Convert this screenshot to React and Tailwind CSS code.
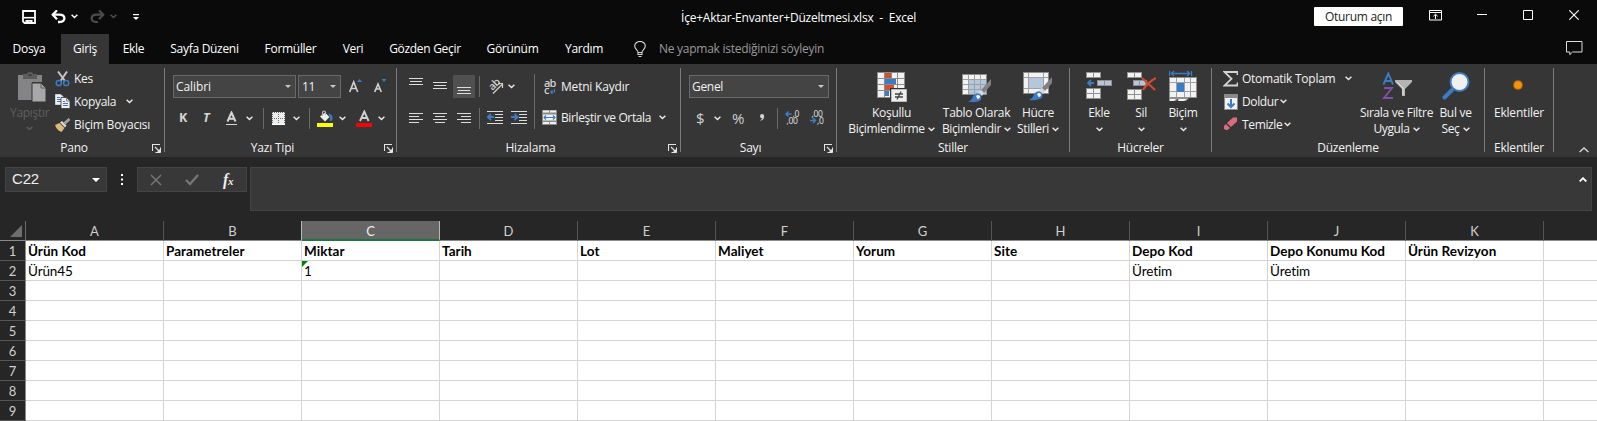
import React from 'react';

const SANS = "font-['Open_Sans','Noto_Sans',sans-serif]";

const Chevron = ({ className = '', color = '#e8e8e8' }) => (
  <svg width="7" height="5" viewBox="0 0 7 5" className={`shrink-0 ${className}`}>
    <path d="M0.6 0.8L3.5 3.5L6.4 0.8" fill="none" stroke={color} strokeWidth="1.5" />
  </svg>
);

const Caret = ({ className = '', color = '#c8c8c8' }) => (
  <svg width="6" height="3" viewBox="0 0 6 3" className={`shrink-0 ${className}`}>
    <path d="M0 0H6L3 3Z" fill={color} />
  </svg>
);

const Launcher = () => (
  <svg width="9" height="9" viewBox="0 0 9 9" className="mr-[3px] ml-1 mt-px shrink-0">
    <path d="M0.5 7V0.5H8M3 3L7 7" fill="none" stroke="#e4e4e4" strokeWidth="1.1" />
    <path d="M3.5 8.5H8.5V3.5" fill="none" stroke="#e4e4e4" strokeWidth="1" />
    <path d="M4.5 8.5H8.5V4.5Z" fill="#e4e4e4" />
  </svg>
);

const VLine = ({ className = '' }) => <div className={`w-px shrink-0 bg-[#6a6a6a] ${className}`} />;

function Group({ label, className, launcher, children }) {
  return (
    <>
      <div className={`flex shrink-0 flex-col ${className}`}>
        <div className="h-[74px]">{children}</div>
        <div className="flex h-[19px] items-center">
          <div className="flex-1 pt-px text-center tracking-[-0.2px]">{label}</div>
          {launcher && <Launcher />}
        </div>
      </div>
      <div className="mt-1 h-[84px] w-px shrink-0 bg-[#7c7c7c]" />
    </>
  );
}

/* ---------- Title bar ---------- */
function TitleBar() {
  return (
    <div className="flex h-[34px] items-start text-white">
      <div className="flex w-[681px] shrink-0 pt-2.5">
        <svg width="14" height="14" viewBox="0 0 14 14" className="ml-[22px]">
          <path d="M1 1H13V13H2.5L1 11.5Z" fill="none" stroke="#fff" strokeWidth="1.8" />
          <path d="M1.5 7.7H12.5" stroke="#fff" strokeWidth="1.6" />
          <path d="M3.5 10H10.5V14H8.4V11.8H6.4V14H3.5Z" fill="#fff" />
        </svg>
        <svg width="15" height="14" viewBox="0 0 15 14" className="ml-[15px]">
          <path d="M1.5 4.7H8.5C15 4.7 15 12 8.5 12H7" fill="none" stroke="#fff" strokeWidth="2.3" />
          <path d="M6 0.3L1.8 4.7L6 9.2" fill="none" stroke="#fff" strokeWidth="2.3" />
        </svg>
        <Chevron className="mt-1 ml-[5px]" color="#fff" />
        <svg width="15" height="14" viewBox="0 0 15 14" className="ml-3">
          <path d="M13.5 4.7H6.5C0 4.7 0 12 6.5 12H8" fill="none" stroke="#4c4c4c" strokeWidth="2.2" />
          <path d="M9 0.3L13.2 4.7L9 9.2" fill="none" stroke="#4c4c4c" strokeWidth="2.2" />
        </svg>
        <Chevron className="mt-1 ml-[5px]" color="#505050" />
        <svg width="6" height="7" viewBox="0 0 6 7" className="mt-1 ml-4">
          <path d="M0 0.6H6" stroke="#fff" strokeWidth="1.2" />
          <path d="M0 3H6L3 6Z" fill="#fff" />
        </svg>
      </div>
      <div className="w-[633px] shrink-0 pt-[9px] leading-[18px] tracking-[-0.22px] whitespace-pre">
        İçe+Aktar-Envanter+Düzeltmesi.xlsx  -  Excel
      </div>
      <div className="mt-[7px] h-[19px] w-[89px] shrink-0 rounded-[1px] bg-white text-center leading-[19px] text-[#222]">
        Oturum açın
      </div>
      <svg width="13" height="11" viewBox="0 0 13 11" className="mt-2.5 ml-[26px]">
        <path d="M0.5 0.5H12.5V10H0.5ZM0.5 2.5H12.5M6.5 9V4.5M4.3 6.3L6.5 4.2L8.7 6.3" fill="none" stroke="#fff" />
      </svg>
      <svg width="10" height="1" viewBox="0 0 10 1" className="mt-3.5 ml-[35px]">
        <path d="M0 0.5H10" stroke="#fff" />
      </svg>
      <svg width="10" height="10" viewBox="0 0 10 10" className="mt-2.5 ml-9">
        <path d="M0.5 0.5H9.5V9.5H0.5Z" fill="none" stroke="#fff" />
      </svg>
      <svg width="10" height="10" viewBox="0 0 10 10" className="mt-2.5 ml-9">
        <path d="M0.3 0.3L9.7 9.7M9.7 0.3L0.3 9.7" fill="none" stroke="#fff" strokeWidth="1.1" />
      </svg>
    </div>
  );
}

const TABS = [
  ['Dosya', 'w-[58px] mr-[3px]'],
  ['Giriş', 'w-12 bg-[#363636]'],
  ['Ekle', 'w-[49px]'],
  ['Sayfa Düzeni', 'w-[93px]'],
  ['Formüller', 'w-[79px]'],
  ['Veri', 'w-[46px]'],
  ['Gözden Geçir', 'w-[98px]'],
  ['Görünüm', 'w-[77px]'],
  ['Yardım', 'w-[66px]'],
];

function Tabs() {
  return (
    <div className="flex h-[30px] text-white">
      {TABS.map(([t, c]) => (
        <div key={t} className={`shrink-0 text-center leading-[30px] whitespace-nowrap ${c}`}>{t}</div>
      ))}
      <svg width="12" height="17" viewBox="0 0 12 17" className="mt-[7px] ml-[17px] shrink-0">
        <path d="M4 11.5C4 9 0.7 8.2 0.7 5.1A5.2 4.6 0 0 1 11.3 5.1C11.3 8.2 8 9 8 11.5ZM4 11.5V13.5H8V11.5M4.5 15.5H7.5" fill="none" stroke="#d8d8d8" strokeWidth="1.1" />
      </svg>
      <div className="ml-[13px] flex-1 leading-[30px] tracking-[-0.26px] text-[#9a9a9a]">Ne yapmak istediğinizi söyleyin</div>
      <svg width="17" height="15" viewBox="0 0 17 15" className="mt-[7px] mr-3.5 shrink-0">
        <path d="M0.5 0.5H16V11H6.5L3.8 13.7V11H0.5Z" fill="none" stroke="#dcdcdc" />
      </svg>
    </div>
  );
}

/* ---------- Ribbon groups ---------- */
function Clipboard() {
  return (
    <Group label="Pano" className="w-[164px]" launcher>
      <div className="flex">
        <div className="flex w-[55px] flex-col items-start">
          <svg width="29" height="31" viewBox="0 0 29 31" className="mt-2 ml-[18px]">
            <path d="M0 3H24V10H14V28H0Z" fill="#848486" />
            <path d="M5 7V2H9Q9 0 12 0Q15 0 15 2H19V7Z" fill="#5c5c5c" />
            <path d="M10.5 3.2H13.5" stroke="#363636" strokeWidth="1.6" />
            <path d="M14 11H23L28 16V30H14Z" fill="#a8a8aa" stroke="#363636" />
            <path d="M23 11V16H28" fill="none" stroke="#5c5c5c" />
          </svg>
          <div className="ml-[10px] w-[39px] text-center leading-[20px] whitespace-nowrap text-[#5f5f5f]">Yapıştır</div>
          <Chevron className="mt-[3px] ml-[26px]" color="#5a5a5a" />
        </div>
        <div className="pt-[3px]">
          <div className="flex h-[23px] items-center">
            <svg width="16" height="16" viewBox="0 0 16 16" className="mr-[3px]">
              <path d="M3 0.5L10 10M12 0.5L5.5 10" stroke="#c4c4c4" strokeWidth="2" />
              <circle cx="3.8" cy="12" r="2.6" fill="none" stroke="#3b7cc4" strokeWidth="1.5" />
              <circle cx="11.2" cy="12" r="2.6" fill="none" stroke="#3b7cc4" strokeWidth="1.5" />
            </svg>
            Kes
          </div>
          <div className="flex h-[23px] items-center">
            <svg width="16" height="15" viewBox="0 0 16 15" className="mr-[3px]">
              <path d="M0.5 0.5H5.5L8.5 3V10.5H0.5Z" fill="#eee" stroke="#d0d0d0" />
              <path d="M2 3.5H5M2 5.5H6M2 7.5H6" stroke="#3b7cc4" />
              <path d="M6 3.5H11.5L15 7V14.5H6Z" fill="#eee" stroke="#363636" strokeWidth="0.8" />
              <path d="M11.5 3.5V7H15" fill="none" stroke="#666" strokeWidth="0.8" />
              <path d="M8 7.5H10M8 9.5H13M8 11.5H13" stroke="#3b7cc4" />
            </svg>
            <span className="w-[52px]">Kopyala</span>
            <Chevron />
          </div>
          <div className="flex h-[23px] items-center">
            <svg width="16" height="14" viewBox="0 0 16 14" className="mr-[3px]">
              <path d="M0 7L4.5 5L9.5 10L6.5 14Q2 12.5 0 7Z" fill="#e0b777" />
              <path d="M5 4.5L7 3L11.5 7.5L10 9.5Z" fill="#d8d8d8" />
              <path d="M9.5 5.5L14.5 1" stroke="#a2a2a2" strokeWidth="2.8" />
            </svg>
            <span className="tracking-[-0.2px] whitespace-nowrap">Biçim Boyacısı</span>
          </div>
        </div>
      </div>
    </Group>
  );
}

function FontGroup() {
  return (
    <Group label="Yazı Tipi" className="w-[231px]" launcher>
      <div className="flex h-[34px] items-start pt-[11px] pl-2">
        <div className="flex h-[23px] w-[123px] items-center justify-between border border-[#696969] bg-[#444] pr-1 pl-[2px] tracking-[-0.1px]">
          Calibri <Caret />
        </div>
        <div className="ml-[2px] flex h-[23px] w-[43px] items-center justify-between border border-[#696969] bg-[#444] pr-1 pl-[3px]">
          11 <Caret />
        </div>
        <svg width="13" height="15" viewBox="0 0 13 15" className="mt-[3px] ml-2">
          <path d="M0.7 14L4.7 4L8.7 14M2.3 10.5H7.2" fill="none" stroke="#d0d0d0" strokeWidth="1.6" />
          <path d="M8 4L10.5 1L13 4Z" fill="#3b7cc4" />
        </svg>
        <svg width="13" height="15" viewBox="0 0 13 15" className="mt-[3px] ml-3">
          <path d="M0.7 14L4 6L7.3 14M2 11H6" fill="none" stroke="#d0d0d0" strokeWidth="1.6" />
          <path d="M7.5 1H12.5L10 4Z" fill="#3b7cc4" />
        </svg>
      </div>
      <div className="mt-[9px] flex h-[22px] items-center font-bold text-[#d6d6d6]">
        <span className="ml-[14px] w-6 text-[12.5px]">K</span>
        <span className="w-6 text-[12.5px] italic">T</span>
        <svg width="11" height="14" viewBox="0 0 11 14" className="-ml-px">
          <path d="M1.5 10.5L5.5 1.5L9.5 10.5M3 7.7H8" fill="none" stroke="#d6d6d6" strokeWidth="2" />
          <path d="M0 13.5H11" stroke="#d6d6d6" />
        </svg>
        <Chevron className="ml-[9px]" />
        <VLine className="ml-[10px] h-[21px]" />
        <svg width="13" height="13" viewBox="0 0 13 13" className="ml-2">
          <path d="M0 0H13V13H0Z" fill="#eee" />
          <path d="M0 0.5H13M0.5 0V12M12.5 0V12M2 6.5H12M6.5 2V12" stroke="#6c6c6c" strokeDasharray="1 1" />
          <path d="M0 12.5H13" stroke="#fff" />
        </svg>
        <Chevron className="ml-[8px]" />
        <VLine className="ml-[9px] h-[21px]" />
        <svg width="16" height="17" viewBox="0 0 16 17" className="ml-[7px]">
          <path d="M3 6.5L8 2.5L12.5 7L8 11.5Z" fill="#eee" />
          <path d="M5.5 6V2Q7 0 8.5 2V5" fill="none" stroke="#bbb" strokeWidth="1.2" />
          <path d="M11 3.5Q17 4 15 10.5L12.5 11Q14 7 11 3.5Z" fill="#3b7cc4" />
          <path d="M0 13H16V17H0Z" fill="#ffff00" />
        </svg>
        <Chevron className="ml-[6px]" />
        <svg width="16" height="17" viewBox="0 0 16 17" className="ml-[10px]">
          <path d="M4 11L8.3 1.5L12.6 11M5.5 8H11" fill="none" stroke="#d0d0d0" strokeWidth="1.9" />
          <path d="M0 13H16V17H0Z" fill="#ff0000" />
        </svg>
        <Chevron className="ml-[6px]" />
      </div>
    </Group>
  );
}

const Lines = ({ d, className = '' }) => (
  <svg width="14" height="20" viewBox="0 0 14 20" className={`shrink-0 ${className}`}>
    <path d={d} stroke="#dcdcdc" strokeWidth="1" />
  </svg>
);

const IndentIcon = ({ arrow, className }) => (
  <svg width="16" height="14" viewBox="0 0 16 14" className={`shrink-0 ${className}`}>
    <path d="M0 0.5H16M8 3.5H16M8 6.5H16M8 9.5H16M0 12.5H16" stroke="#dcdcdc" />
    <path d={arrow} fill="none" stroke="#3b7cc4" strokeWidth="2" />
  </svg>
);

function AlignGroup() {
  return (
    <Group label="Hizalama" className="w-[283px]" launcher>
      <div className="flex">
        <div className="w-[137px]">
          <div className="flex h-[34px] items-start pt-[11px] pl-3">
            <Lines className="mt-[3px]" d="M0 0.5H14M1 3.5H13M0 6.5H14" />
            <Lines className="mt-[7px] ml-2.5" d="M0 0.5H14M1 3.5H13M0 6.5H14" />
            <div className="ml-1.5 h-[23px] w-[22px] bg-[#505050] pt-3 pl-1">
              <svg width="14" height="8" viewBox="0 0 14 8">
                <path d="M0 0.5H14M1 3.5H13M0 6.5H14" stroke="#dcdcdc" />
              </svg>
            </div>
            <VLine className="mt-px ml-1 h-[21px]" />
            <svg width="16" height="16" viewBox="0 0 16 16" className="mt-[3px] ml-[7px] overflow-visible">
              <text x="0" y="0" transform="translate(5.5 13) rotate(-45)" fontSize="10.5" fontFamily="Open Sans" fontWeight="600" fill="#d0d0d0" letterSpacing="-0.3">ab</text>
              <path d="M6 15.5L15 6.5M11 5.5H15.5V10" fill="none" stroke="#d0d0d0" strokeWidth="1.2" />
            </svg>
            <Chevron className="mt-[9px] ml-[5px]" />
          </div>
          <div className="mt-[9px] flex h-[22px] items-center pl-3">
            <Lines d="M0 5.5H14M0 8.5H10M0 11.5H14M0 14.5H10" />
            <Lines className="ml-2.5" d="M0 5.5H14M2 8.5H12M0 11.5H14M2 14.5H12" />
            <Lines className="ml-2.5" d="M0 5.5H14M4 8.5H14M0 11.5H14M4 14.5H14" />
            <VLine className="ml-2 h-[21px]" />
            <IndentIcon className="ml-[7px]" arrow="M7 6H1.5M4 3L1 6L4 9" />
            <IndentIcon className="ml-2" arrow="M0 6H6M3.5 3L6.5 6L3.5 9" />
          </div>
        </div>
        <VLine className="mt-2.5 h-[55px]" />
        <div className="pt-[11px] pl-[7px]">
          <div className="flex h-[23px] items-center">
            <svg width="16" height="18" viewBox="0 0 16 18" className="mr-[3px] overflow-visible">
              <text x="2" y="8.5" fontSize="11" fontFamily="Open Sans" fontWeight="600" fill="#d0d0d0" letterSpacing="-0.8">ab</text>
              <text x="2" y="16" fontSize="11" fontFamily="Open Sans" fontWeight="600" fill="#d0d0d0">c</text>
              <path d="M12.5 11V14H9M10.5 12.3L8.7 14L10.5 15.7" fill="none" stroke="#3b7cc4" strokeWidth="1.2" />
            </svg>
            <span className="tracking-[-0.2px] whitespace-nowrap">Metni Kaydır</span>
          </div>
          <div className="mt-2 flex h-[23px] items-center">
            <svg width="15" height="15" viewBox="0 0 15 15" className="mr-1">
              <path d="M0 0H15V15H0Z" fill="#8a8a8a" />
              <path d="M1 0.5H7V2.5H1ZM8 0.5H14V2.5H8ZM1 4.5H14V10.5H1ZM1 12H7V14H1ZM8 12H14V14H8Z" fill="#f0f0f0" />
              <path d="M2 7.5H13M4 5.5L2 7.5L4 9.5M11 5.5L13 7.5L11 9.5" fill="none" stroke="#3b7cc4" strokeWidth="1.2" />
            </svg>
            <span className="w-[98px] tracking-[-0.38px] whitespace-nowrap">Birleştir ve Ortala</span>
            <Chevron />
          </div>
        </div>
      </div>
    </Group>
  );
}

function NumberGroup() {
  return (
    <Group label="Sayı" className="w-[155px]" launcher>
      <div className="flex h-[34px] items-start pt-[11px] pl-2">
        <div className="flex h-[23px] w-[140px] items-center justify-between border border-[#696969] bg-[#444] pr-1 pl-[2px]">
          Genel <Caret />
        </div>
      </div>
      <div className="mt-[9px] flex h-[22px] items-center text-[#d0d0d0]">
        <span className="ml-[15px] w-[18px] text-[15px]">$</span>
        <Chevron />
        <span className="ml-[11px] w-[27px] text-[15px]">%</span>
        <svg width="6" height="7" viewBox="0 0 6 7" className="mb-0.5">
          <path d="M1 2.2A2 2 0 0 1 5.2 2.2C5.2 4.5 4 6 1.8 6.8L1.3 6C2.4 5.5 3 4.8 3 4.2C1.8 4.2 1 3.2 1 2.2Z" fill="#d0d0d0" />
        </svg>
        <VLine className="ml-[12px] h-[21px]" />
        <svg width="16" height="16" viewBox="0 0 16 16" className="ml-[7px] overflow-visible">
          <path d="M6.5 4H1M3.5 1.5L1 4L3.5 6.5" fill="none" stroke="#3b7cc4" strokeWidth="1.5" />
          <text x="7.5" y="6.5" fontSize="8.5" fontFamily="Open Sans" fill="#e0e0e0">,0</text>
          <text x="1.5" y="14" fontSize="8.5" fontFamily="Open Sans" fill="#e0e0e0">,00</text>
        </svg>
        <svg width="16" height="16" viewBox="0 0 16 16" className="ml-[9px] overflow-visible">
          <text x="1.5" y="6.5" fontSize="8.5" fontFamily="Open Sans" fill="#e0e0e0">,00</text>
          <path d="M0 10.5H5.5M3 8L5.5 10.5L3 13" fill="none" stroke="#3b7cc4" strokeWidth="1.5" />
          <text x="7" y="14" fontSize="8.5" fontFamily="Open Sans" fill="#e0e0e0">,0</text>
        </svg>
      </div>
    </Group>
  );
}

function BigButton({ icon, top, bottom, className }) {
  return (
    <div className={`flex shrink-0 flex-col items-center ${className}`}>
      <div className="flex h-[41px] items-start pt-2">{icon}</div>
      <div className="leading-4 whitespace-nowrap">{top}</div>
      <div className="flex h-4 items-center leading-4 tracking-[-0.35px] whitespace-nowrap">
        {bottom}
        <Chevron className={bottom ? 'ml-[3px]' : ''} />
      </div>
    </div>
  );
}

const Brush = () => (
  <>
    <path d="M29 5V11L22 19L19 16Z" fill="#808080" />
    <path d="M19 16L22 19L20 22L16 18Z" fill="#d8d8d8" />
    <path d="M6 28Q10 26 11 22Q14 18 18 20Q21 24 18 26.5Q13 29 6 28Z" fill="#3b7cc4" />
    <path d="M14 22Q16 20 18 22Q18 25 15.5 25Z" fill="#f4f4f4" />
  </>
);

const ConditionalIcon = () => (
  <svg width="30" height="30" viewBox="0 0 30 30">
    <path d="M0 0H28V26H0Z" fill="#8c8c8c" />
    <path d="M1 1H7V6H1ZM8 1H14V6H8ZM15 1H20V6H15ZM21 1H27V6H21ZM1 7H7V12H1ZM8 7H14V12H8ZM15 7H20V12H15ZM21 7H27V12H21ZM1 13H7V18H1ZM8 13H14V18H8ZM15 13H20V18H15ZM21 13H27V18H21ZM1 19H7V25H1ZM8 19H14V25H8Z" fill="#f2f2f2" />
    <path d="M8 1H14V6H8ZM8 13H17V18H8Z" fill="#d05030" />
    <path d="M8 7H19V12H8ZM8 19H12V24H8Z" fill="#3b7cc4" />
    <path d="M13 16H30V30H13Z" fill="#363636" />
    <path d="M14.5 17.5H29.5V29.5H14.5Z" fill="#eee" stroke="#bbb" />
    <path d="M18 22H26M18 25H26M24 19.5L20 27.5" stroke="#444" strokeWidth="1.3" />
  </svg>
);

const TableIcon = () => (
  <svg width="30" height="30" viewBox="0 0 30 30">
    <path d="M0 2H25V23H0Z" fill="#8c8c8c" />
    <path d="M1 3H24V22H1Z" fill="#f2f2f2" />
    <path d="M7 8H24V22H7Z" fill="#b4c7dc" />
    <path d="M1 7.5H24M1 12.5H24M1 17.5H24M6.5 3V22M12.5 3V22M18.5 3V22" stroke="#a0a0a0" />
    <g transform="translate(0 2)"><Brush /></g>
  </svg>
);

const CellStyleIcon = () => (
  <svg width="30" height="30" viewBox="0 0 30 30">
    <path d="M0 0H26V22H0Z" fill="#8c8c8c" />
    <path d="M1 1H25V21H1Z" fill="#f2f2f2" />
    <path d="M1 5.5H25M1 16.5H25M5.5 1V21M20.5 1V21" stroke="#a0a0a0" />
    <path d="M6 6H20V16H6Z" fill="#b4c7dc" />
    <Brush />
  </svg>
);

const cellsTop = 'M1 1H7V5H1ZM8 1H14V5H8Z';
const InsertIcon = () => (
  <svg width="27" height="28" viewBox="0 0 27 28">
    <path d="M0 0H15V6H0ZM0 16H15V27H0ZM11 8H26V14H11Z" fill="#909090" />
    <path d={cellsTop + 'M1 17H7V21H1ZM8 17H14V21H8ZM1 22H7V26H1ZM8 22H14V26H8Z'} fill="#f2f2f2" />
    <path d="M12 9H18V13H12ZM19 9H25V13H19Z" fill="#b4c7dc" />
    <path d="M8 11H2M5 8L2 11L5 14" fill="none" stroke="#3b7cc4" strokeWidth="1.8" />
  </svg>
);

const DeleteIcon = () => (
  <svg width="29" height="28" viewBox="0 0 29 28">
    <path d="M0 0H15V6H0ZM0 17H15V28H0ZM6 8H20V14H6Z" fill="#909090" />
    <path d={cellsTop + 'M1 18H7V22H1ZM8 18H14V22H8ZM1 23H7V27H1ZM8 23H14V27H8Z'} fill="#f2f2f2" />
    <path d="M7 9H12V13H7ZM13 9H18V13H13Z" fill="#b4c7dc" />
    <path d="M15 6Q22 12 28 18M29 6Q21 10 16 18" fill="none" stroke="#cf4b2d" strokeWidth="2.2" />
  </svg>
);

const FormatIcon = () => (
  <svg width="28" height="32" viewBox="0 0 28 32" className="-mt-[2px]">
    <path d="M0.5 1V6M22.5 1V6M2 3.5H21M5 1L2.3 3.5L5 6M18 1L20.7 3.5L18 6" fill="none" stroke="#3b7cc4" strokeWidth="1.3" />
    <path d="M0 7H28V28H20L17 31H9V29L7 31H0Z" fill="#909090" />
    <path d="M1 8H27V27H1ZM1 29H7L5 31H1ZM10 29H18L15 31H9Z" fill="#f2f2f2" />
    <path d="M1 12.5H27M1 21.5H27M7.5 8V27M15.5 8V27M21.5 8V27" stroke="#a0a0a0" />
    <path d="M8 13H15V22H8Z" fill="#3b7cc4" />
  </svg>
);

function StylesGroup() {
  return (
    <Group label="Stiller" className="w-[232px]">
      <div className="flex">
        <BigButton className="ml-[7px] w-[95px]" icon={<ConditionalIcon />} top="Koşullu" bottom="Biçimlendirme" />
        <BigButton className="w-[75px]" icon={<TableIcon />} top="Tablo Olarak" bottom="Biçimlendir" />
        <BigButton className="w-[48px]" icon={<CellStyleIcon />} top="Hücre" bottom="Stilleri" />
      </div>
    </Group>
  );
}

function CellsGroup() {
  return (
    <Group label="Hücreler" className="w-[141px]">
      <div className="flex pl-2">
        <BigButton className="w-[42px]" icon={<InsertIcon />} top="Ekle" />
        <BigButton className="w-[42px]" icon={<DeleteIcon />} top="Sil" />
        <BigButton className="w-[42px]" icon={<FormatIcon />} top="Biçim" />
      </div>
    </Group>
  );
}

function EditGroup() {
  return (
    <Group label="Düzenleme" className="w-[272px]">
      <div className="flex pl-[11px]">
        <div className="w-[137px] shrink-0 pt-[3px]">
          <div className="flex h-[23px] items-center">
            <svg width="15" height="16" viewBox="0 0 15 16" className="mr-1">
              <path d="M14.5 4V1H1.5L8.5 7.8L1.5 14.5H14.5V11.5" fill="none" stroke="#d4d4d4" strokeWidth="1.8" />
            </svg>
            <span className="w-[103px] tracking-[-0.26px] whitespace-nowrap">Otomatik Toplam</span>
            <Chevron />
          </div>
          <div className="flex h-[23px] items-center">
            <svg width="15" height="16" viewBox="0 0 15 16" className="mr-1">
              <path d="M1 0H15V16H1Z" fill="#8a8a8a" />
              <path d="M2 4H14V15H2Z" fill="#f2f2f2" />
              <path d="M8 5V13M4.5 9.5L8 13L11.5 9.5" fill="none" stroke="#3b7cc4" strokeWidth="2" />
            </svg>
            <span className="w-[38px] tracking-[-0.4px]">Doldur</span>
            <Chevron />
          </div>
          <div className="flex h-[23px] items-center">
            <svg width="15" height="14" viewBox="0 0 15 14" className="mb-0.5 mr-1">
              <path d="M4 6L10 0.5H14V4.5L8 10Z" fill="#dd6b80" />
              <path d="M3 7L7 11L4.5 13H2.5L1 11.5V9Z" fill="#dd6b80" />
            </svg>
            <span className="w-[42px] tracking-[-0.35px]">Temizle</span>
            <Chevron />
          </div>
        </div>
        <BigButton
          className="w-[73px]"
          top="Sırala ve Filtre"
          bottom="Uygula"
          icon={
            <svg width="30" height="28" viewBox="0 0 30 28">
              <path d="M1.5 12.5L6.3 1.5L11 12.5M3 9H9.5" fill="none" stroke="#3b7cc4" strokeWidth="1.9" />
              <path d="M2 16H10L2 26H11" fill="none" stroke="#8250a8" strokeWidth="1.9" />
              <path d="M13 8H30V10L23 17V24H20V17L13 10Z" fill="#b4b4b4" />
              <path d="M15 10L21 16V23" fill="none" stroke="#e8e8e8" />
            </svg>
          }
        />
        <BigButton
          className="ml-[5px] w-[35px]"
          top="Bul ve"
          bottom="Seç"
          icon={
            <svg width="28" height="28" viewBox="0 0 28 28">
              <path d="M2.5 25.5L10 18" stroke="#3b7cc4" strokeWidth="4" strokeLinecap="round" />
              <circle cx="17.5" cy="10" r="9" fill="#f0f0f0" stroke="#3b7cc4" strokeWidth="2" />
            </svg>
          }
        />
      </div>
    </Group>
  );
}

function AddinsGroup() {
  return (
    <Group label="Eklentiler" className="w-[68px]">
      <div className="flex flex-col items-center">
        <div className="flex h-[41px] pt-[15px]">
          <svg width="12" height="12" viewBox="0 0 12 12">
            <circle cx="5" cy="6" r="5.4" fill="#5c4420" />
            <circle cx="5" cy="6" r="4.6" fill="#b8720f" />
            <circle cx="5" cy="6" r="3.8" fill="#f59207" />
          </svg>
        </div>
        <div className="leading-4 tracking-[-0.2px]">Eklentiler</div>
      </div>
    </Group>
  );
}

function Ribbon() {
  return (
    <div className="flex h-[93px] bg-[#363636] text-[#f2f2f2]">
      <Clipboard />
      <FontGroup />
      <AlignGroup />
      <NumberGroup />
      <StylesGroup />
      <CellsGroup />
      <EditGroup />
      <AddinsGroup />
      <svg width="10" height="6" viewBox="0 0 10 6" className="mt-[83px] ml-[25px] shrink-0">
        <path d="M0.6 5L5 1L9.4 5" fill="none" stroke="#d8d8d8" strokeWidth="1.4" />
      </svg>
    </div>
  );
}

/* ---------- Formula bar ---------- */
function FormulaBar() {
  return (
    <div className="flex h-16 items-start bg-[#262626] pt-[10px] pl-[5px]">
      <div className="flex h-[25px] w-[102px] shrink-0 items-center justify-between border border-[#444] bg-[#383838] pr-[6px] pl-[6px] font-['Liberation_Sans',sans-serif] text-[15px] tracking-[-0.2px] text-[#eee]">
        C22
        <svg width="8" height="4" viewBox="0 0 8 4"><path d="M0 0H8L4 4Z" fill="#fff" /></svg>
      </div>
      <svg width="2" height="12" viewBox="0 0 2 12" className="mt-[7px] ml-[14px] shrink-0">
        <path d="M0 0H2V2H0ZM0 4.5H2V6.5H0ZM0 9H2V11H0Z" fill="#fff" />
      </svg>
      <div className="ml-[14px] flex h-[25px] w-[110px] shrink-0 items-center border border-[#444] bg-[#383838]">
        <svg width="12" height="12" viewBox="0 0 12 12" className="ml-3">
          <path d="M1 1L11 11M11 1L1 11" stroke="#767676" strokeWidth="1.5" />
        </svg>
        <svg width="14" height="12" viewBox="0 0 14 12" className="ml-[23px]">
          <path d="M1 6L5 10L13 1" fill="none" stroke="#767676" strokeWidth="2.4" />
        </svg>
        <span className="ml-[24px] font-['Liberation_Serif',serif] text-[16px] leading-none font-bold text-[#eee] italic">
          f<span className="text-[11px]">x</span>
        </span>
      </div>
      <div className="ml-[3px] flex h-11 w-[1342px] shrink-0 justify-end border border-[#444] bg-[#383838] pt-[9px] pr-1">
        <svg width="8" height="5" viewBox="0 0 8 5">
          <path d="M0.7 4.5L4 1.2L7.3 4.5" fill="none" stroke="#fff" strokeWidth="1.8" />
        </svg>
      </div>
    </div>
  );
}

/* ---------- Worksheet ---------- */
const COLS = 'ABCDEFGHIJK'.split('');
const ROWS = [
  ['Ürün Kod', 'Parametreler', 'Miktar', 'Tarih', 'Lot', 'Maliyet', 'Yorum', 'Site', 'Depo Kod', 'Depo Konumu Kod', 'Ürün Revizyon'],
  ['Ürün45', '', '1', '', '', '', '', '', 'Üretim', 'Üretim', ''],
  [], [], [], [], [], [], [],
];

function Sheet() {
  return (
    <div className="font-[Lato,'Open_Sans',sans-serif] text-[13px] tracking-normal">
      <div className="flex h-5 bg-[#262626] text-[#cfcfcf]">
        <div className="flex h-5 w-[26px] shrink-0 items-end justify-end border-r border-b border-r-[#6a6a6a] border-b-[#8a8a8a] pr-[3px] pb-[3px]">
          <svg width="12" height="12" viewBox="0 0 12 12"><path d="M12 0V12H0Z" fill="#6e6e6e" /></svg>
        </div>
        {COLS.map((c) => (
          <div
            key={c}
            className={`h-5 w-[138px] shrink-0 border-r text-center leading-[21px] ${
              c === 'C'
                ? 'border-b-2 border-r-[#b8b8b8] border-b-[#217346] bg-[#666] text-[#f0f0f0]'
                : c === 'B'
                ? 'border-b border-r-[#b8b8b8] border-b-[#8a8a8a]'
                : 'border-b border-r-[#555] border-b-[#8a8a8a]'
            }`}
          >
            {c}
          </div>
        ))}
        <div className="flex-1 border-b border-[#8a8a8a]" />
      </div>
      {ROWS.map((row, r) => (
        <div key={r} className="flex h-5 bg-white text-black">
          <div className="w-[26px] shrink-0 border-r border-b border-r-[#8a8a8a] border-b-[#555] bg-[#262626] text-center leading-[21px] text-[#cfcfcf]">
            {r + 1}
          </div>
          {COLS.map((c, i) => (
            <div
              key={c}
              className={`relative w-[138px] shrink-0 border-r border-b border-[#d4d4d4] pl-[2px] text-[13.5px] leading-[21px] whitespace-nowrap ${
                r === 0 ? 'font-bold tracking-[0.05px]' : 'tracking-[-0.1px]'
              }`}
            >
              {row[i]}
              {r === 1 && c === 'C' && (
                <svg width="6" height="6" viewBox="0 0 6 6" className="absolute top-0 left-0">
                  <path d="M0 0H6L0 6Z" fill="#008000" />
                </svg>
              )}
            </div>
          ))}
          <div className="flex-1 border-b border-[#d4d4d4]" />
        </div>
      ))}
    </div>
  );
}

export default function App() {
  return (
    <div className={`h-[421px] w-[1597px] overflow-hidden bg-[#0a0a0a] text-[12px] tracking-[-0.3px] ${SANS}`}>
      <TitleBar />
      <Tabs />
      <Ribbon />
      <FormulaBar />
      <Sheet />
    </div>
  );
}
